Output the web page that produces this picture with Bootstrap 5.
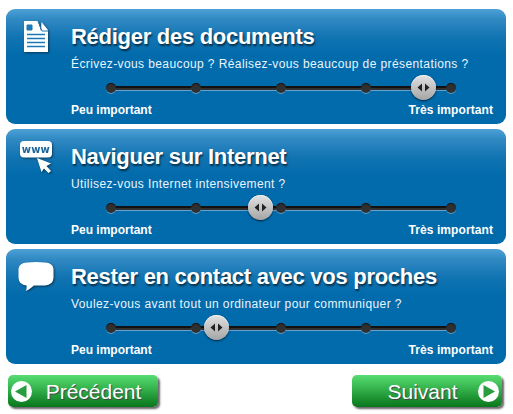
<!DOCTYPE html>
<html lang="fr">
<head>
<meta charset="utf-8">
<meta name="viewport" content="width=device-width, initial-scale=1">
<title>Vos besoins</title>
<link href="https://cdn.jsdelivr.net/npm/bootstrap@5.3.0/dist/css/bootstrap.min.css" rel="stylesheet">
<style>
body{font-family:"Liberation Sans",Arial,sans-serif;background:#fff;padding-top:9px;height:414px}
.survey{width:500px;margin:0 0 0 6px;gap:5px}
.question{height:115px;border-radius:9px;color:#fff;background:linear-gradient(#4ca1d6 0,#3189c3 10px,#1274b2 28px,#026bab 46px,#006aab 100%)}
.q-icon{width:65px;flex:none}
.q-icon svg{display:block;margin:8px 0 0 8px;filter:drop-shadow(1px 1px 1px rgba(0,0,0,.5))}
.q-body{width:422px}
.q-title{font-size:22px;line-height:26px;font-weight:700;margin:15px 0 0;letter-spacing:-.28px;text-shadow:1px 2px 2px rgba(0,0,0,.6);white-space:nowrap}
.q-text{font-size:12px;line-height:16px;margin:6px 0 0;letter-spacing:.4px;white-space:nowrap;color:#e9f5ff}
.slider{height:12px;width:350px;margin:11px 0 0 35px}
.slider::before{content:"";position:absolute;left:5px;right:5px;top:3px;height:5px;background:linear-gradient(#111 0 2px,#303030 2px 4px,#64a3cd 4px)}
.stop{width:10px;height:10px;border-radius:50%;background:#303030;box-shadow:0 1px 0 #5c9dc8,inset 0 1px 1px #151515;position:relative}
.knob-area{position:absolute;left:5px;right:5px;top:0;height:10px}
.knob{position:absolute;top:-8px;width:25px;height:25px;margin-left:-12.5px;border-radius:50%;background:linear-gradient(#e2e2e2,#a5a5a5);box-shadow:0 1px 2px rgba(0,0,0,.65),inset 0 1px 0 #eee}
.knob svg{display:block}
.q-scale{font-size:12px;line-height:14px;font-weight:700;margin-top:8px}
.q-scale span:last-child{letter-spacing:.08px}
.nav-row{margin:11px 4px 0 2px}
.nav-btn{width:150px;height:32px;border:0;border-radius:5px;padding:0 3px;color:#fff;font-size:21px;line-height:32px;background:linear-gradient(#57dd72,#33b04a 45%,#08761c);box-shadow:2px 2px 2px rgba(60,50,60,.75);text-shadow:1px 1px 1px rgba(70,50,70,.85)}
.nav-btn span{padding-top:1px}
.nav-btn svg{flex:none}
</style>
</head>
<body>
<main class="survey d-flex flex-column">
  <section class="question d-flex">
    <div class="q-icon"><svg width="40" height="38" viewBox="0 0 40 38"><path d="M10 4H24L27 14L27.500 5L34 13V35H10Z" fill="#fff"/><path d="M24 4L28 14H34" fill="none" stroke="#1a79b5" stroke-width="1"/><path d="M13 8h5v5h-5z" fill="#1a79b5" stroke="#1a79b5"/><path d="M13 17.500h18M13 21.500h18M13 25.500h18M13 29.500h18" stroke="#1a79b5" stroke-width="1.300"/></svg></div>
    <div class="q-body">
      <h2 class="q-title">Rédiger des documents</h2>
      <p class="q-text">Écrivez-vous beaucoup ? Réalisez-vous beaucoup de présentations ?</p>
      <div class="slider position-relative d-flex justify-content-between"><i class="stop"></i><i class="stop"></i><i class="stop"></i><i class="stop"></i><i class="stop"></i><div class="knob-area"><span class="knob" style="left:91.9%"><svg width="25" height="25"><path d="M11 8.500v8L6.500 12.500zM14 8.500v8l4.500-4z" fill="#222"/></svg></span></div></div>
      <div class="q-scale d-flex justify-content-between"><span>Peu important</span><span>Très important</span></div>
    </div>
  </section>
  <section class="question d-flex">
    <div class="q-icon"><svg width="40" height="38" viewBox="0 0 40 38"><rect x="6" y="4" width="32" height="16.500" rx="4" fill="#fff"/><text x="7.800" y="15.500" textLength="29" letter-spacing="1" font-family="DejaVu Sans" font-size="10" font-weight="700" fill="#1c659a">www</text><path d="M23 21L37 26.500L32.500 29L37 34L34.500 36L30 31.500L27.500 35Z" fill="#fff"/></svg></div>
    <div class="q-body">
      <h2 class="q-title">Naviguer sur Internet</h2>
      <p class="q-text">Utilisez-vous Internet intensivement ?</p>
      <div class="slider position-relative d-flex justify-content-between"><i class="stop"></i><i class="stop"></i><i class="stop"></i><i class="stop"></i><i class="stop"></i><div class="knob-area"><span class="knob" style="left:44%"><svg width="25" height="25"><path d="M11 8.500v8L6.500 12.500zM14 8.500v8l4.500-4z" fill="#222"/></svg></span></div></div>
      <div class="q-scale d-flex justify-content-between"><span>Peu important</span><span>Très important</span></div>
    </div>
  </section>
  <section class="question d-flex">
    <div class="q-icon"><svg width="42" height="38" viewBox="0 0 42 38"><path d="M13 5.500Q22 4.500 31 5.500Q39 6 39.500 12V21Q39 28 31 28.500H20Q16 32 12 34Q13 31 12.500 28.500Q5 28 4.500 21V12Q5 6 13 5.500Z" fill="#fff"/></svg></div>
    <div class="q-body">
      <h2 class="q-title">Rester en contact avec vos proches</h2>
      <p class="q-text">Voulez-vous avant tout un ordinateur pour communiquer ?</p>
      <div class="slider position-relative d-flex justify-content-between"><i class="stop"></i><i class="stop"></i><i class="stop"></i><i class="stop"></i><i class="stop"></i><div class="knob-area"><span class="knob" style="left:31%"><svg width="25" height="25"><path d="M11 8.500v8L6.500 12.500zM14 8.500v8l4.500-4z" fill="#222"/></svg></span></div></div>
      <div class="q-scale d-flex justify-content-between"><span>Peu important</span><span>Très important</span></div>
    </div>
  </section>
</main>
<nav class="survey"><div class="nav-row d-flex justify-content-between">
  <button class="nav-btn d-flex align-items-center" type="button"><svg width="21" height="21" viewBox="0 0 21 21"><circle cx="10.500" cy="10.500" r="10.500" fill="#fff"/><path d="M15.500 4v13L4 10.500z" fill="#279d3d"/></svg><span class="flex-fill text-center">Précédent</span></button>
  <button class="nav-btn d-flex align-items-center" type="button"><span class="flex-fill text-center ps-2 ms-1">Suivant</span><svg width="21" height="21" viewBox="0 0 21 21"><circle cx="10.500" cy="10.500" r="10.500" fill="#fff"/><path d="M5.500 4v13L17 10.500z" fill="#279d3d"/></svg></button>
</div></nav>
</body>
</html>
